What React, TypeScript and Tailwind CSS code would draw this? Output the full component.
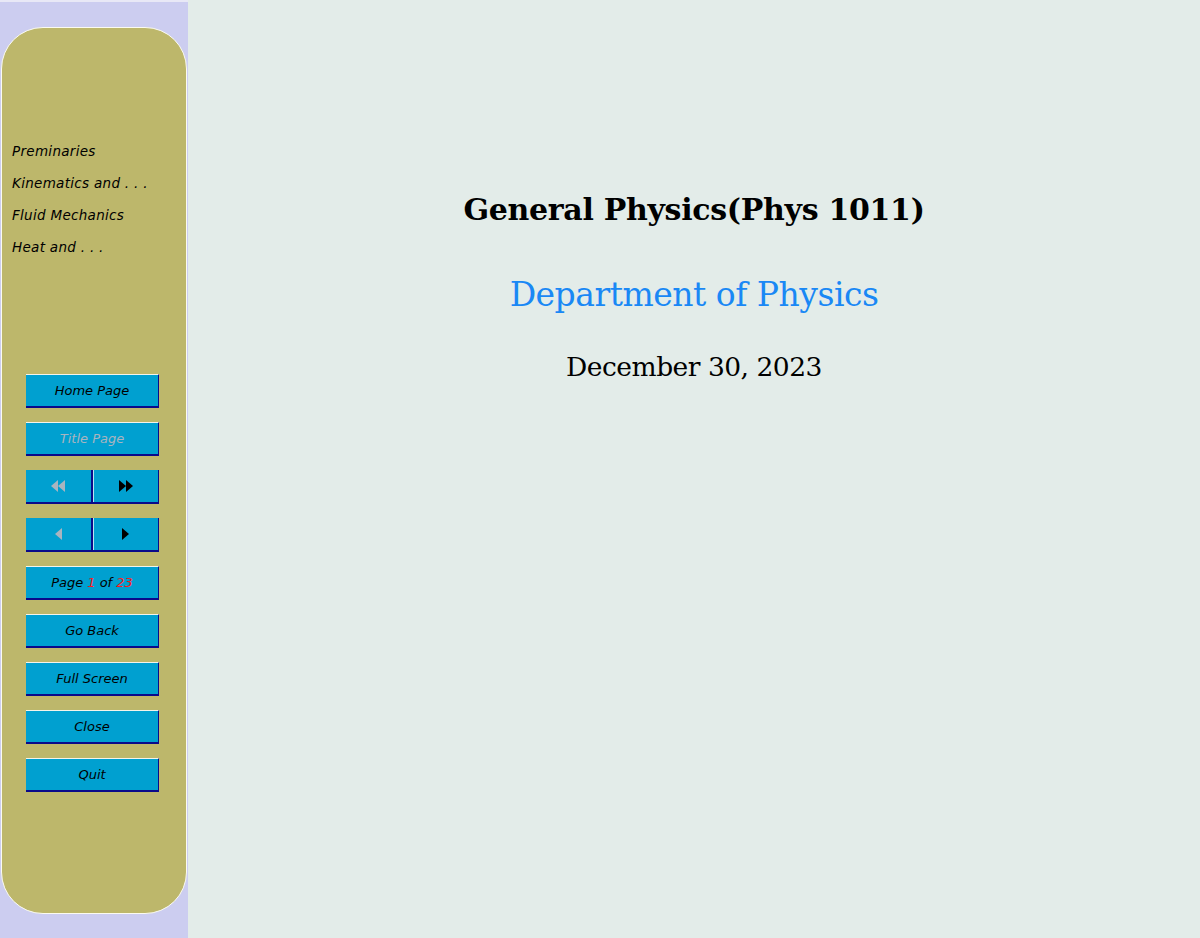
import React from "react";

const navItems = ["Preminaries", "Kinematics and . . .", "Fluid Mechanics", "Heat and . . ."];

function NavButton({ children, dim }: { children: React.ReactNode; dim?: boolean }) {
  return (
    <div
      className={`h-[34px] w-[133px] bg-[#00a0d0] border-t border-t-[#f4f4ea] border-r border-r-[#0a0a8a] border-b-2 border-b-[#0a0a8a] flex items-center justify-center text-[13px] italic ${
        dim ? "text-[#a9b4bf]" : "text-black"
      }`}
    >
      {children}
    </div>
  );
}

function SplitButton({ left, right }: { left: React.ReactNode; right: React.ReactNode }) {
  return (
    <div className="h-[34px] w-[133px] flex border-b-2 border-b-[#0a0a8a]">
      <div className="flex-1 bg-[#00a0d0] border-r-2 border-r-[#0a0a8a] flex items-center justify-center">{left}</div>
      <div className="flex-1 bg-[#00a0d0] border-l border-l-[#b8e4f0] border-r border-r-[#0a0a8a] flex items-center justify-center">
        {right}
      </div>
    </div>
  );
}

function Tri({ dir, color }: { dir: "l" | "r"; color: string }) {
  return (
    <svg width="7" height="12" viewBox="0 0 7 12">
      <polygon points={dir === "r" ? "0,0 7,6 0,12" : "7,0 0,6 7,12"} fill={color} />
    </svg>
  );
}

export default function App() {
  const sans = { fontFamily: '"DejaVu Sans", "Liberation Sans", sans-serif' };
  return (
    <div className="w-[1200px] h-[938px] flex overflow-hidden">
      <aside className="w-[188px] h-full bg-[#cccdf0] border-t-2 border-t-[#e8e8f6] pt-[25px] pl-px" style={sans}>
        <div className="w-[186px] h-[887px] bg-[#bdb76b] border border-[#fbfbf0] rounded-[42px] flex flex-col">
          <nav className="mt-[114px] pl-[10px] flex flex-col gap-[13px] text-[13.5px] italic text-black tracking-[0.3px]">
            {navItems.map((n) => (
              <div key={n} className="h-[19px] leading-[19px]">
                {n}
              </div>
            ))}
          </nav>
          <div className="mt-[117px] pl-[24px] flex flex-col gap-[14px]">
            <NavButton>Home Page</NavButton>
            <NavButton dim>Title Page</NavButton>
            <SplitButton
              left={
                <span className="flex">
                  <Tri dir="l" color="#a9b4bf" />
                  <Tri dir="l" color="#a9b4bf" />
                </span>
              }
              right={
                <span className="flex">
                  <Tri dir="r" color="#000" />
                  <Tri dir="r" color="#000" />
                </span>
              }
            />
            <SplitButton left={<Tri dir="l" color="#a9b4bf" />} right={<Tri dir="r" color="#000" />} />
            <NavButton>
              Page <span className="text-[#ff1a1a] mx-[4px]">1</span> of <span className="text-[#ff1a1a] ml-[4px]">23</span>
            </NavButton>
            <NavButton>Go Back</NavButton>
            <NavButton>Full Screen</NavButton>
            <NavButton>Close</NavButton>
            <NavButton>Quit</NavButton>
          </div>
        </div>
      </aside>
      <main
        className="flex-1 h-full bg-[#e3ece9] flex flex-col items-center pt-[190px]"
        style={{ fontFamily: '"DejaVu Serif", "Liberation Serif", serif' }}
      >
        <h1 className="text-[30px] font-bold text-black leading-[40px] tracking-[-0.3px]">General Physics(Phys 1011)</h1>
        <p className="mt-[43px] text-[33px] text-[#1a88f5] leading-[44px] tracking-[-0.5px]">Department of Physics</p>
        <p className="mt-[32px] text-[26.5px] text-black leading-[36px] tracking-[-0.5px]">December 30, 2023</p>
      </main>
    </div>
  );
}
